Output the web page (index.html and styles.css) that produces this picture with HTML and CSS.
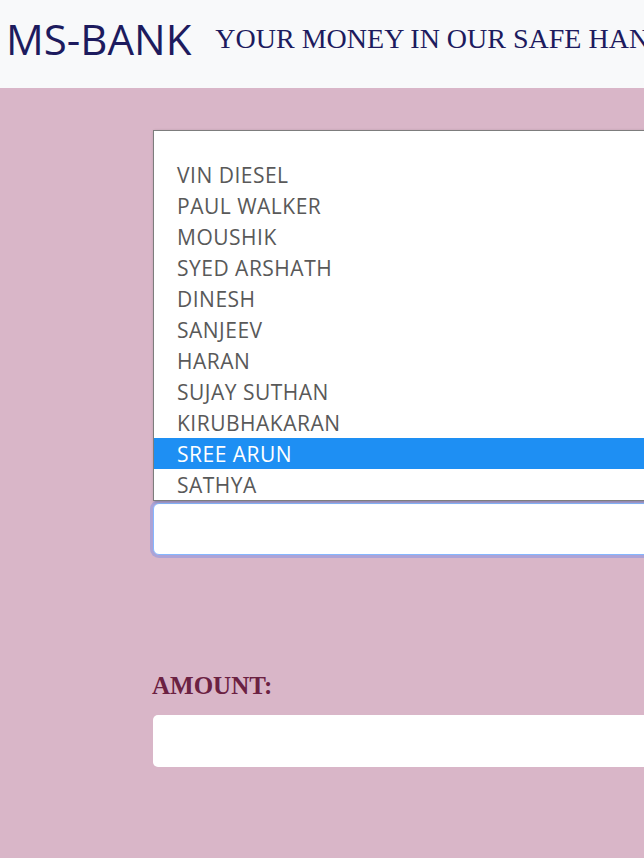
FILE: index.html
```html
<!DOCTYPE html>
<html lang="en">
<head>
<meta charset="utf-8">
<title>MS-BANK</title>
<link rel="stylesheet" href="styles.css">
</head>
<body>
<header class="topbar">
  <span class="brand">MS-BANK</span>
  <span class="tagline">YOUR MONEY IN OUR SAFE HANDS</span>
</header>
<main class="page">
  <form class="transfer">
    <div class="field-select">
      <div class="select-box"></div>
      <ul class="options">
        <li class="option option-empty"></li>
        <li class="option">VIN DIESEL</li>
        <li class="option">PAUL WALKER</li>
        <li class="option">MOUSHIK</li>
        <li class="option">SYED ARSHATH</li>
        <li class="option">DINESH</li>
        <li class="option">SANJEEV</li>
        <li class="option">HARAN</li>
        <li class="option">SUJAY SUTHAN</li>
        <li class="option">KIRUBHAKARAN</li>
        <li class="option option-selected">SREE ARUN</li>
        <li class="option">SATHYA</li>
      </ul>
    </div>
    <label class="field-label">AMOUNT:</label>
    <div class="input-box"></div>
  </form>
</main>
</body>
</html>
```
FILE: styles.css
```css
html, body {
  margin: 0;
  padding: 0;
}
body {
  background: #d9b6c8;
  overflow: hidden;
  height: 858px;
  font-family: "Open Sans", "Noto Sans", sans-serif;
}
.topbar {
  height: 88px;
  box-sizing: border-box;
  background: #f8f9fa;
  display: flex;
  align-items: center;
  gap: 24px;
  padding: 0 0 10px 6px;
  white-space: nowrap;
  overflow: hidden;
}
.brand {
  font-family: "Open Sans", sans-serif;
  font-size: 42px;
  line-height: 1;
  color: #1d1b5e;
}
.tagline {
  font-family: "Liberation Serif", serif;
  font-size: 28px;
  line-height: 1;
  color: #1d1b5e;
}
.page {
  display: block;
}
.transfer {
  margin-left: 153px;
  width: 640px;
  padding-top: 415px;
}
.field-select {
  position: relative;
}
.select-box {
  height: 52px;
  box-sizing: border-box;
  background: #fff;
  border: 1px solid #86b7fe;
  border-radius: 6px;
  box-shadow: 0 0 0 3px rgba(120, 140, 230, 0.45);
}
.options {
  position: absolute;
  left: 0;
  right: -40px;
  bottom: calc(100% + 2px);
  margin: 0;
  padding: 0;
  list-style: none;
  background: #fff;
  border: 1px solid #7d7d7d;
  box-shadow: 1px 1px 3px rgba(0, 0, 0, 0.25);
}
.option {
  height: 31px;
  box-sizing: border-box;
  line-height: 31px;
  padding: 1px 0 0 23px;
  font-size: 21px;
  letter-spacing: 0.5px;
  color: #595959;
}
.option-empty {
  height: 28px;
}
.option-selected {
  background: #1e8ff3;
  color: #fff;
}
.field-label {
  display: block;
  margin-top: 118px;
  margin-left: -1px;
  font-family: "Liberation Serif", serif;
  font-weight: bold;
  font-size: 25px;
  line-height: 25px;
  color: #6b2142;
}
.input-box {
  margin-top: 17px;
  height: 52px;
  background: #fff;
  border-radius: 5px;
}
```
